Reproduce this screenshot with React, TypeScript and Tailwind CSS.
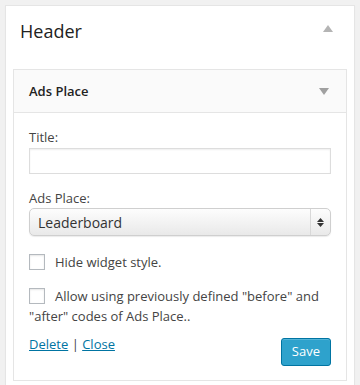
import { useState } from "react";

const font = { fontFamily: '"Open Sans", "Noto Sans", sans-serif' };

function Checkbox() {
    const [checked, setChecked] = useState(false);
    return (
        <span
            onClick={() => setChecked(!checked)}
            className="shrink-0 w-[16px] h-[16px] border border-[#b4b9be] bg-white shadow-[inset_0_1px_2px_rgba(0,0,0,0.1)] flex items-center justify-center text-[#1e8cbe] text-[12px]"
        >
            {checked ? "✓" : ""}
        </span>
    );
}

function Arrow({ up }: { up?: boolean }) {
    return (
        <svg width="10" height="7" viewBox="0 0 10 7">
            {up ? <path d="M5 0 L10 7 L0 7 Z" fill="#b4b4b4" /> : <path d="M0 0 L10 0 L5 7 Z" fill="#a0a0a0" />}
        </svg>
    );
}

export default function App() {
    const [place, setPlace] = useState("Leaderboard");

    return (
        <div className="w-[360px] h-[385px] bg-[#f1f1f1] pt-[5px] px-[5px] overflow-hidden text-[#444]" style={font}>
            <div className="h-[400px] bg-white border border-[#e5e5e5] shadow-[0_1px_1px_rgba(0,0,0,0.04)]">
                <div className="h-[63px] flex items-start justify-between pl-[14px] pr-[21px] pt-[11px]">
                    <h2 className="text-[18px] leading-[28px] text-[#222]">Header</h2>
                    <span className="mt-[8px]"><Arrow up /></span>
                </div>

                <div className="mx-[7px] border border-[#e5e5e5] bg-white">
                    <div className="h-[43px] bg-[#fafafa] border-b border-[#e5e5e5] flex items-center justify-between pl-[15px] pr-[17px]">
                        <h4 className="text-[13px] font-semibold text-[#222] pt-[1px]">Ads Place</h4>
                        <Arrow />
                    </div>

                    <div className="px-[15px] pt-[16px] pb-[14px] text-[13px]">
                        <label className="block leading-[17px]">Title:</label>
                        <input
                            type="text"
                            className="mt-[2px] w-full h-[26px] border border-[#ddd] shadow-[inset_0_1px_2px_rgba(0,0,0,0.07)] outline-none px-[5px]"
                        />

                        <label className="block leading-[17px] mt-[16px]">Ads Place:</label>
                        <div className="mt-[1px] relative h-[28px] rounded-[5px] border border-[#cfcfcf] bg-gradient-to-b from-[#fdfdfd] to-[#e9e9e9] shadow-[0_1px_1px_rgba(0,0,0,0.08)] flex items-center">
                            <select
                                value={place}
                                onChange={(e) => setPlace(e.target.value)}
                                className="appearance-none bg-transparent w-full h-full pl-[8px] text-[14px] text-[#333] outline-none"
                                style={font}
                            >
                                <option>Leaderboard</option>
                                <option>Sidebar</option>
                                <option>Footer</option>
                            </select>
                            <div className="absolute right-0 top-0 h-full w-[20px] border-l border-[#d8d8d8] flex flex-col items-center justify-center gap-[1px] pointer-events-none">
                                <svg width="7" height="4" viewBox="0 0 7 4"><path d="M3.5 0 L7 4 L0 4 Z" fill="#333" /></svg>
                                <svg width="7" height="4" viewBox="0 0 7 4"><path d="M0 0 L7 0 L3.5 4 Z" fill="#333" /></svg>
                            </div>
                        </div>

                        <div className="mt-[16px] flex items-center gap-[10px] leading-[20px]">
                            <Checkbox />
                            <span>Hide widget style.</span>
                        </div>

                        <div className="mt-[14px] leading-[20px]">
                            <span className="inline-flex align-middle mr-[10px] -mt-[3px]"><Checkbox /></span>
                            Allow using previously defined "before" and "after" codes of Ads Place..
                        </div>

                        <div className="mt-[12px] flex items-center justify-between">
                            <div className="text-[13px] -mt-[14px]">
                                <a href="#" className="text-[#0074a2] underline">Delete</a>
                                <span className="text-[#444]"> | </span>
                                <a href="#" className="text-[#0074a2] underline">Close</a>
                            </div>
                            <button className="h-[28px] px-[10px] rounded-[3px] bg-[#2ea2cc] border border-[#0074a2] text-white text-[13px] shadow-[inset_0_1px_0_rgba(120,200,230,0.5)]">
                                Save
                            </button>
                        </div>
                    </div>
                </div>
            </div>
        </div>
    );
}
